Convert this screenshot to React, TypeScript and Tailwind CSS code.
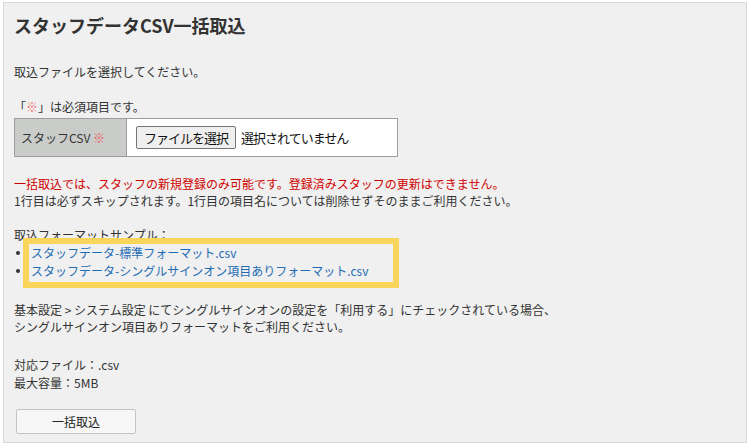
export default function App() {
  const font = { fontFamily: '"Noto Sans CJK JP", "Noto Sans", sans-serif' };
  return (
    <div className="pt-[2px] pl-[3px] bg-white min-h-[447px]" style={font}>
      <div className="w-[744px] h-[441px] border border-[#d9d9d9] bg-[#eff0ef] pl-[10px] pt-[10px] text-[12px] text-[#333]">
        <h1 className="text-[18px] font-bold leading-[24px] text-[#333]">スタッフデータCSV一括取込</h1>

        <p className="mt-[26px] leading-[18px]">取込ファイルを選択してください。</p>

        <p className="mt-[17px] leading-[18px]">
          「<span className="text-[#f26b6b]">※</span>」は必須項目です。
        </p>

        <table className="mt-[2px] w-[384px] border-collapse border border-[#9d9d9d]">
          <tbody>
            <tr className="h-[38px]">
              <th className="w-[112px] bg-[#c9ccc9] border-r border-[#9d9d9d] text-left font-normal pl-[6px] text-[#333]">
                スタッフCSV <span className="text-[#f05a5a] text-[12px]">※</span>
              </th>
              <td className="bg-white pl-[9px]">
                <div className="flex items-center gap-[5px]">
                  <button className="h-[23px] px-[7px] border border-[#767676] rounded-[2px] bg-[#efefef] text-[13px] tracking-[-1px] text-[#111] leading-none">
                    ファイルを選択
                  </button>
                  <span className="text-[13px] tracking-[-1px] text-[#111]">選択されていません</span>
                </div>
              </td>
            </tr>
          </tbody>
        </table>

        <div className="mt-[18px] leading-[17px]">
          <p className="text-[#d00000]">一括取込では、スタッフの新規登録のみ可能です。登録済みスタッフの更新はできません。</p>
          <p>1行目は必ずスキップされます。1行目の項目名については削除せずそのままご利用ください。</p>
        </div>

        <p className="mt-[17px] leading-[17px]">取込フォーマットサンプル：</p>

        <div className="relative w-fit mt-[1px]">
          <ul className="leading-[18px]">
            {['スタッフデータ-標準フォーマット.csv', 'スタッフデータ-シングルサインオン項目ありフォーマット.csv'].map((name) => (
              <li key={name} className="flex items-center">
                <span className="ml-[2px] mr-[11px] w-[4px] h-[4px] rounded-full bg-[#333]" />
                <a href="#" className="text-[#1f6cb5]">{name}</a>
              </li>
            ))}
          </ul>
          <div className="absolute left-[9px] top-[-6px] w-[376px] h-[50px] border-[6px] border-[#f9d55b]" />
        </div>

        <div className="mt-[21px] leading-[17px]">
          <p>基本設定 &gt; システム設定 にてシングルサインオンの設定を「利用する」にチェックされている場合、</p>
          <p>シングルサインオン項目ありフォーマットをご利用ください。</p>
        </div>

        <div className="mt-[21px] leading-[18px]">
          <p>対応ファイル：.csv</p>
          <p>最大容量：5MB</p>
        </div>

        <button className="mt-[17px] ml-[2px] w-[120px] h-[25px] border border-[#c4c4c4] rounded-[2px] bg-[#f6f6f6] text-[12px] text-[#222] leading-none">
          一括取込
        </button>
      </div>
    </div>
  );
}
